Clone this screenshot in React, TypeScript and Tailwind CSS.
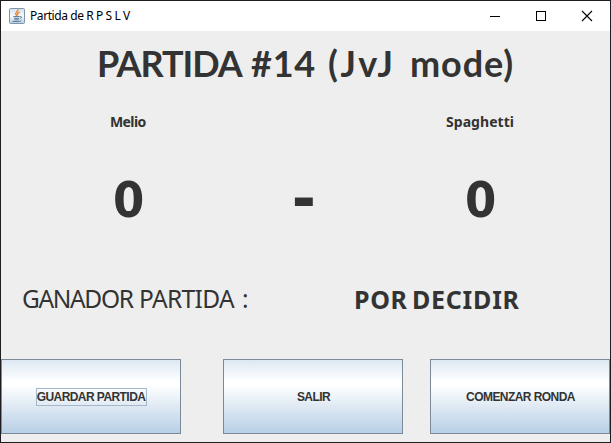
import React from "react";

function JavaIcon() {
  return (
    <svg width="16" height="16" viewBox="0 0 16 16" fill="none">
      <defs>
        <linearGradient id="tile" x1="0" y1="0" x2="0" y2="1">
          <stop offset="0" stopColor="#d3dfea" />
          <stop offset="0.5" stopColor="#f6f9fc" />
          <stop offset="1" stopColor="#b8cddf" />
        </linearGradient>
      </defs>
      <rect x="0.5" y="0.5" width="15" height="15" rx="1" fill="url(#tile)" stroke="#7f95a9" />
      <path d="M9 1.5C9.4 3.6 5.6 4.4 6.8 6.3L7.8 7.9M10.6 4.2C8 5.4 8 6.2 8.8 7.4" stroke="#e8802c" strokeWidth="1.3" />
      <path d="M4.3 8.6H10.5M5.1 10.3H10M5.6 11.8H9.5M3.5 13.4H10.5L12.3 12.7M10.6 8.7C13.4 7.8 13 10.3 10.7 10.8" stroke="#537795" strokeWidth="1" />
    </svg>
  );
}

function ActionButton({ label, focused = false }: { label: string; focused?: boolean }) {
  return (
    <button className="flex h-[75px] w-[180px] items-center justify-center border border-[#7a8a99] bg-[linear-gradient(180deg,#dde8f3_0%,#ffffff_30%,#ffffff_34%,#b8cfe5_100%)] font-['Liberation_Sans',sans-serif] text-[12px] font-bold text-[#333333]">
      <span className={focused ? "flex h-[18px] w-[111px] items-center justify-center border border-[#a3b8cc] tracking-[-0.56px] whitespace-nowrap" : "pl-px tracking-[-0.56px] whitespace-nowrap"}>
        {label}
      </span>
    </button>
  );
}

export default function App() {
  return (
    <div className="flex h-[443px] w-[611px] flex-col overflow-hidden border border-[#1f1d20] bg-[#eeeeee] font-['Noto_Sans',sans-serif] text-[#333333]">
      <header className="flex h-[30px] shrink-0 items-center bg-white pl-2 text-black">
        <JavaIcon />
        <span className="ml-[5px] text-[12px] tracking-[-0.035em] whitespace-pre">Partida de R P S L V</span>
        <div className="mr-[17px] ml-auto flex items-center gap-[34px]">
          <svg width="12" height="12" viewBox="0 0 12 12"><path d="M1 6.5H11" stroke="#000" /></svg>
          <svg width="12" height="12" viewBox="0 0 12 12" fill="none"><rect x="1.5" y="1.5" width="9" height="9" stroke="#000" /></svg>
          <svg width="12" height="12" viewBox="0 0 12 12"><path d="M1 1L11 11M11 1L1 11" stroke="#000" strokeWidth="1.1" /></svg>
        </div>
      </header>
      <h1 className="mt-[11px] flex h-[42px] pl-[96px] font-['Lato',sans-serif] text-[36px] leading-[42px] font-bold whitespace-nowrap">
        <span className="w-[154px] tracking-[-1px]">PARTIDA</span>
        <span className="w-[77px] tracking-[0.8px]">#14</span>
        <span className="w-[82px] tracking-[2.6px]">(JvJ</span>
        <span className="tracking-[0.9px]">mode)</span>
      </h1>
      <div className="mt-[28px] flex h-5 text-[14px] leading-5 font-bold">
        <span className="w-[336px] pl-[109px] tracking-[-0.6px]">Melio</span>
        <span className="pl-[109px] tracking-[0.05px]">Spaghetti</span>
      </div>
      <div className="mt-[38px] flex h-[60px] font-['DejaVu_Sans_Condensed','DejaVu_Sans',sans-serif] text-[50px] leading-[60px] font-bold">
        <span className="w-[182px] pl-[112px]">0</span>
        <span className="w-[170px] pl-[110px] font-['Noto_Sans',sans-serif] text-[68px] leading-[48px]">-</span>
        <span className="pl-[112px]">0</span>
      </div>
      <div className="mt-[52px] flex h-[34px] text-[24.5px] leading-[34px] whitespace-nowrap">
        <span className="w-[117px] pl-[21px] tracking-[-1.35px]">GANADOR</span>
        <span className="w-[105px] pl-[21px] tracking-[-0.65px]">PARTIDA</span>
        <span className="w-[131px] pl-[19px]">:</span>
        <span className="w-[58px] text-[25px] font-bold tracking-[0.6px]">POR</span>
        <span className="text-[25px] font-bold tracking-[0.75px]">DECIDIR</span>
      </div>
      <div className="mt-[43px] flex">
        <ActionButton label="GUARDAR PARTIDA" focused />
        <div className="w-[42px]" />
        <ActionButton label="SALIR" />
        <div className="w-[27px]" />
        <ActionButton label="COMENZAR RONDA" />
      </div>
    </div>
  );
}
